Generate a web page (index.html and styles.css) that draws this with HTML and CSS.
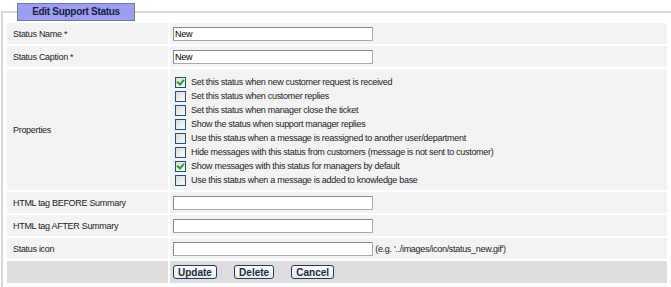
FILE: index.html
```html
<!DOCTYPE html>
<html lang="en">
<head>
  <meta charset="UTF-8" />
  <title>Edit Support Status</title>
  <link rel="stylesheet" href="styles.css">
</head>
<body>

  <fieldset class="panel">
    <legend class="panel-title"><span>Edit Support Status</span></legend>

    <table class="form-table">
      <tr>
        <td class="label">Status Name *</td>
        <td class="value"><input type="text" class="field" value="New"></td>
      </tr>
      <tr>
        <td class="label">Status Caption *</td>
        <td class="value"><input type="text" class="field" value="New"></td>
      </tr>
      <tr>
        <td class="label">Properties</td>
        <td class="value props">
          <label class="prop"><span class="box checked"></span>Set this status when new customer request is received</label>
          <label class="prop"><span class="box"></span>Set this status when customer replies</label>
          <label class="prop"><span class="box"></span>Set this status when manager close the ticket</label>
          <label class="prop"><span class="box"></span>Show the status when support manager replies</label>
          <label class="prop"><span class="box"></span>Use this status when a message is reassigned to another user/department</label>
          <label class="prop"><span class="box"></span>Hide messages with this status from customers (message is not sent to customer)</label>
          <label class="prop"><span class="box checked"></span>Show messages with this status for managers by default</label>
          <label class="prop"><span class="box"></span>Use this status when a message is added to knowledge base</label>
        </td>
      </tr>
      <tr>
        <td class="label">HTML tag BEFORE Summary</td>
        <td class="value"><input type="text" class="field"></td>
      </tr>
      <tr>
        <td class="label">HTML tag AFTER Summary</td>
        <td class="value"><input type="text" class="field"></td>
      </tr>
      <tr>
        <td class="label">Status icon</td>
        <td class="value"><input type="text" class="field"> <span class="hint">(e.g. '../images/icon/status_new.gif')</span></td>
      </tr>
      <tr class="actions">
        <td class="label"></td>
        <td class="value">
          <button class="btn">Update</button>
          <button class="btn">Delete</button>
          <button class="btn">Cancel</button>
        </td>
      </tr>
    </table>
  </fieldset>

</body>
</html>
```

FILE: styles.css
```css
body {
  margin: 0;
  font-family: 'Liberation Sans', Arial, sans-serif;
  font-size: 9px;
  letter-spacing: -0.3px;
  color: #222;
  background: #fff;
}
.panel {
  margin: 3px 0 0 1px;
  padding: 0 2px 4px 2px;
  border: 2px solid #d8d8d8;
  border-right: 0;
  border-bottom: 0;
}
.panel-title {
  margin-left: 12px;
  padding: 0;
  text-align: left;
  font-weight: bold;
  font-size: 10px;
  letter-spacing: -0.3px;
  color: #1c1c40;
  background-color: #9c9ef0;
  border: 1px solid #77779a;
}
.panel-title span {
  display: block;
  width: 116px;
  height: 16px;
  line-height: 16px;
  text-align: center;
}
.form-table {
  width: 100%;
  border-spacing: 2px;
  margin-top: 0;
}
.form-table td {
  background-color: #f3f3f3;
  padding: 0;
}
.label {
  width: 155px;
  height: 21px;
  padding-left: 6px !important;
}
.value {
  padding-left: 3px !important;
}
.field {
  width: 200px;
  height: 14px;
  box-sizing: border-box;
  margin: 0;
  padding: 0 1px;
  font: 9px 'Liberation Sans', Arial, sans-serif;
  letter-spacing: -0.3px;
  color: #000;
  border: 1px solid #aaa;
  border-top-color: #888;
  border-left-color: #888;
  background: #fff;
  vertical-align: middle;
}
.hint {
  vertical-align: middle;
}
.props {
  padding: 6px 0 3px 5px !important;
}
.prop {
  display: flex;
  align-items: center;
  height: 14px;
}
.box {
  width: 9px;
  height: 9px;
  margin-right: 5px;
  border: 1px solid #1c5180;
  background: linear-gradient(135deg, #dcdcd6, #fbfbf9);
  position: relative;
}
.box.checked::after {
  content: "";
  position: absolute;
  left: 2px;
  top: 0px;
  width: 3px;
  height: 5px;
  border: solid #21a121;
  border-width: 0 2px 2px 0;
  transform: rotate(40deg);
}
.actions td {
  background-color: #dddddd;
  height: 22px;
}
.btn {
  margin: 0 15px 0 0;
  padding: 0 4px;
  height: 14px;
  font: bold 10px 'Liberation Sans', Arial, sans-serif;
  color: #1c2a40;
  background: linear-gradient(#ffffff, #ecebe6);
  border: 1px solid #1c3c70;
  border-radius: 3px;
  vertical-align: middle;
}
```
